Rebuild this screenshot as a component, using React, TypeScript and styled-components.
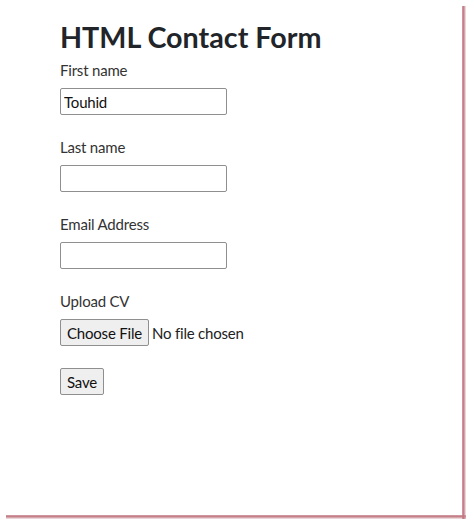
import React from 'react';
import styled, { createGlobalStyle } from 'styled-components';

const GlobalStyle = createGlobalStyle`
  html, body {
    margin: 0;
    background: #ffffff;
  }
  body {
    font-family: Lato, 'Open Sans', sans-serif;
    color: #212529;
  }
`;

// soft edge of the page shadow, from the sheet edge outwards
const edge = 'rgba(196, 128, 136, 0.75), rgba(192, 118, 128, 0.95) 40%, rgba(205, 150, 158, 0.55) 80%, rgba(230, 205, 208, 0.3)';

// the page sheet with its offset shadow along the right and bottom edges
const Frame = styled.div`
  width: 466px;
  height: 519px;
  box-sizing: border-box;
  padding: 0 4px 4px 0;
  background:
    linear-gradient(to right, ${edge}) right 0 top 6px / 4px calc(100% - 6px) no-repeat,
    linear-gradient(to bottom, ${edge}) left 6px bottom 0 / calc(100% - 6px) 4px no-repeat;
`;

const Sheet = styled.div`
  height: 100%;
  background: #ffffff;
  box-sizing: border-box;
  padding: 19px 0 0 60px;
`;

const Title = styled.h1`
  margin: 0 0 3px;
  font-size: 28.7px;
  line-height: 36px;
  font-weight: 700;
  color: #212529;
`;

const Field = styled.div`
  display: flex;
  flex-direction: column;
  align-items: flex-start;
  margin-bottom: 20px;
`;

const Label = styled.label`
  font-size: 15px;
  letter-spacing: -0.2px;
  line-height: 24px;
  margin-bottom: 6px;
  color: #333;
`;

const TextInput = styled.input`
  box-sizing: border-box;
  width: 167px;
  height: 27px;
  margin: 0;
  padding: 1px 3px;
  border: 1px solid #8f8f8f;
  border-radius: 2px;
  font-family: inherit;
  font-size: 15px;
  letter-spacing: -0.2px;
  color: #111;
`;

const FileRow = styled.div`
  display: flex;
  align-items: center;
  gap: 3px;
  font-size: 15px;
  letter-spacing: -0.2px;
  color: #222;
`;

const Actions = styled.div`
  padding-top: 2px;
`;

const Button = styled.button`
  box-sizing: border-box;
  height: 27px;
  margin: 0;
  padding: 0 6px;
  background: #efefef;
  border: 1px solid #8f8f8f;
  border-radius: 2px;
  font-family: inherit;
  font-size: 15px;
  letter-spacing: -0.2px;
  color: #111;
`;

export default function App() {
  return (
    <>
      <GlobalStyle />
      <Frame>
        <Sheet>
          <Title>HTML Contact Form</Title>
          <Field>
            <Label htmlFor='fname'>First name</Label>
            <TextInput id='fname' type='text' defaultValue='Touhid' />
          </Field>
          <Field>
            <Label htmlFor='lname'>Last name</Label>
            <TextInput id='lname' type='text' />
          </Field>
          <Field>
            <Label htmlFor='email'>Email Address</Label>
            <TextInput id='email' type='email' />
          </Field>
          <Field>
            <Label>Upload CV</Label>
            <FileRow>
              <Button type='button'>Choose File</Button>
              <span>No file chosen</span>
            </FileRow>
          </Field>
          <Actions>
            <Button type='submit'>Save</Button>
          </Actions>
        </Sheet>
      </Frame>
    </>
  );
}
